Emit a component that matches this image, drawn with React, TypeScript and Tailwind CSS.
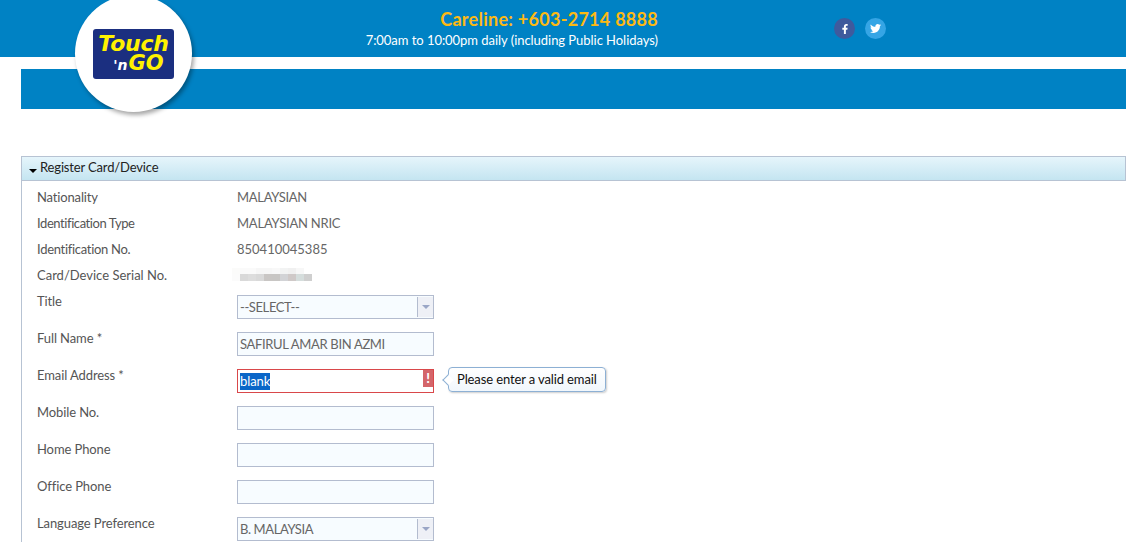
// App.tsx
import React from 'react';
import { FaFacebookF, FaTwitter } from 'react-icons/fa';

const staticRows = [
  { label: 'Nationality', value: 'MALAYSIAN', labelClass: 'tracking-[-0.15px]', valueClass: 'tracking-[-0.3px]' },
  { label: 'Identification Type', value: 'MALAYSIAN NRIC', labelClass: 'tracking-[-0.42px]', valueClass: 'tracking-[-0.22px]' },
  { label: 'Identification No.', value: '850410045385', labelClass: 'tracking-[-0.3px]', valueClass: '' },
];

const topBlur = ['#fbfbfa', '#fafafa', '#fafafa', '#f6f6f6', '#f6f6f6', '#f8f8f8', '#f2f3f3', '#f0f0f0', '#f7f7f7', '#ffffff'];
const bottomBlur = ['#fbfbfb', '#d9d9d9', '#dddddd', '#d9d9d9', '#c9c6c4', '#c8c6c4', '#d2d3d6', '#cfc9c8', '#d5dddc', '#cfcfcf'];

const Logo = () => (
  <div className="absolute left-[75px] top-[-5px] flex h-[117px] w-[117px] items-center justify-center rounded-full bg-white shadow-[2px_3px_4px_rgba(0,0,0,0.35)]">
    <div className="mt-[1px] flex h-[50px] w-[81px] flex-col items-center justify-center rounded-[3px] bg-[#1b2f80] font-['DejaVu_Sans',sans-serif] font-bold italic text-[#fff200]">
      <span className="text-[22px] leading-[20px] tracking-[-0.2px]">Touch</span>
      <span className="flex items-baseline pl-[10px] text-[21px] leading-[18px]">
        <span className="mr-[1px] text-[14px] text-white">'n</span>GO
      </span>
    </div>
  </div>
);

const Label = ({ children, className = '' }: { children: React.ReactNode; className?: string }) => (
  <div className={`w-[200px] shrink-0 text-[13px] text-[#555] ${className}`}>{children}</div>
);

const TextField = ({ value }: { value?: string }) => (
  <div className="flex h-6 w-[197px] items-center border border-[#b3bccf] bg-[#f7fcff] px-[2px] pt-[1px] text-[13px] tracking-[-0.33px] text-[#666]">
    {value}
  </div>
);

const SelectField = ({ value }: { value: string }) => (
  <div className="flex h-6 w-[197px] items-center border border-[#b3bccf] bg-[#f7fcff] pl-[2px] text-[13px] tracking-[-0.4px] text-[#666]">
    <span className="flex-1 pt-[1px]">{value}</span>
    <span className="flex h-[20px] w-4 items-center justify-center border-l border-[#b3bccf] bg-[#eef0f6]">
      <span className="h-0 w-0 border-x-[4px] border-t-[4px] border-x-transparent border-t-[#9aa6c6]" />
    </span>
  </div>
);

const FormRow = ({ label, children }: { label: string; children: React.ReactNode }) => (
  <div className="flex h-[37px] items-start">
    <Label className="tracking-[-0.1px]">
      <div className="mt-[-3px]">{label}</div>
    </Label>
    {children}
  </div>
);

const App: React.FC = () => {
  return (
    <div className="relative h-[542px] w-[1126px] overflow-hidden bg-white font-['Lato',sans-serif]">
      <header className="flex h-[57px] bg-[#0082c4]">
        <div className="w-[658px] shrink-0 pt-[8px] text-right">
          <div className="text-[18px] font-bold leading-[22px] tracking-[0.27px] text-[#fdb913]">Careline: +603-2714 8888</div>
          <div className="mt-[1px] text-[13px] leading-[18px] tracking-[-0.04px] text-white">7:00am to 10:00pm daily (including Public Holidays)</div>
        </div>
        <div className="ml-[176px] mt-[18px] flex gap-[10px]">
          <span className="flex h-[21px] w-[21px] items-center justify-center rounded-full bg-[#3f5a9d] text-white">
            <FaFacebookF className="h-[10px] w-[10px]" />
          </span>
          <span className="flex h-[21px] w-[21px] items-center justify-center rounded-full bg-[#35a5e5] text-white">
            <FaTwitter className="h-[11px] w-[11px]" />
          </span>
        </div>
      </header>

      <div className="ml-[21px] mt-[12px] h-10 bg-[#0082c4]" />

      <section className="ml-[21px] mt-[47px]">
        <div className="flex h-[25px] items-center border border-[#b7c3d3] bg-gradient-to-b from-[#e6f5fb] to-[#c4e5f1] pb-[2px] pl-[7px] text-[13px] tracking-[-0.15px] text-[#222]">
          <span className="mr-[3px] mt-[6px] h-0 w-0 border-x-[4px] border-t-[4px] border-x-transparent border-t-black" />
          Register Card/Device
        </div>

        <div className="border-l border-[#b7c3d3] pl-[15px] pt-[4px]">
          {staticRows.map((row) => (
            <div key={row.label} className="flex h-[26px] items-center">
              <Label className={row.labelClass}>{row.label}</Label>
              <div className={`text-[13px] text-[#666] ${row.valueClass}`}>{row.value}</div>
            </div>
          ))}
          <div className="flex h-[26px] items-center">
            <Label>Card/Device Serial No.</Label>
            <div className="ml-[-5px] mt-[-3px] flex flex-col">
              <div className="flex">
                {topBlur.map((c, i) => (
                  <span key={i} className="h-[6px] w-2" style={{ backgroundColor: c }} />
                ))}
              </div>
              <div className="flex">
                {bottomBlur.map((c, i) => (
                  <span key={i} className="h-[7px] w-2" style={{ backgroundColor: c }} />
                ))}
              </div>
            </div>
          </div>

          <div className="pt-[6px]">
            <FormRow label="Title">
              <SelectField value="--SELECT--" />
            </FormRow>
            <FormRow label="Full Name *">
              <TextField value="SAFIRUL AMAR BIN AZMI" />
            </FormRow>
            <FormRow label="Email Address *">
              <div className="relative flex h-6 w-[197px] items-center border border-[#d9474a] bg-white px-[2px] text-[13px] text-white">
                <span className="bg-[#0a66c8] leading-[17px] tracking-[-0.1px]">blank</span>
                <span className="absolute right-0 top-0 flex h-[17px] w-[10px] items-center justify-center bg-[#d4656a] text-[13px] font-black leading-none text-white">
                  !
                </span>
                <div className="absolute left-[210px] top-[-3px] flex h-[25px] items-center whitespace-nowrap rounded-[4px] border border-[#8db0d4] bg-gradient-to-b from-white to-[#f1f7fc] px-[8px] text-[13px] tracking-[-0.12px] text-[#111] shadow-[1px_1px_2px_rgba(0,0,0,0.2)]">
                  <span className="absolute left-[-5px] top-[8px] h-2 w-2 rotate-45 border-b border-l border-[#8db0d4] bg-white" />
                  Please enter a valid email
                </div>
              </div>
            </FormRow>
            <FormRow label="Mobile No.">
              <TextField />
            </FormRow>
            <FormRow label="Home Phone">
              <TextField />
            </FormRow>
            <FormRow label="Office Phone">
              <TextField />
            </FormRow>
            <FormRow label="Language Preference">
              <SelectField value="B. MALAYSIA" />
            </FormRow>
          </div>
        </div>
      </section>

      <Logo />
    </div>
  );
};

export default App;
